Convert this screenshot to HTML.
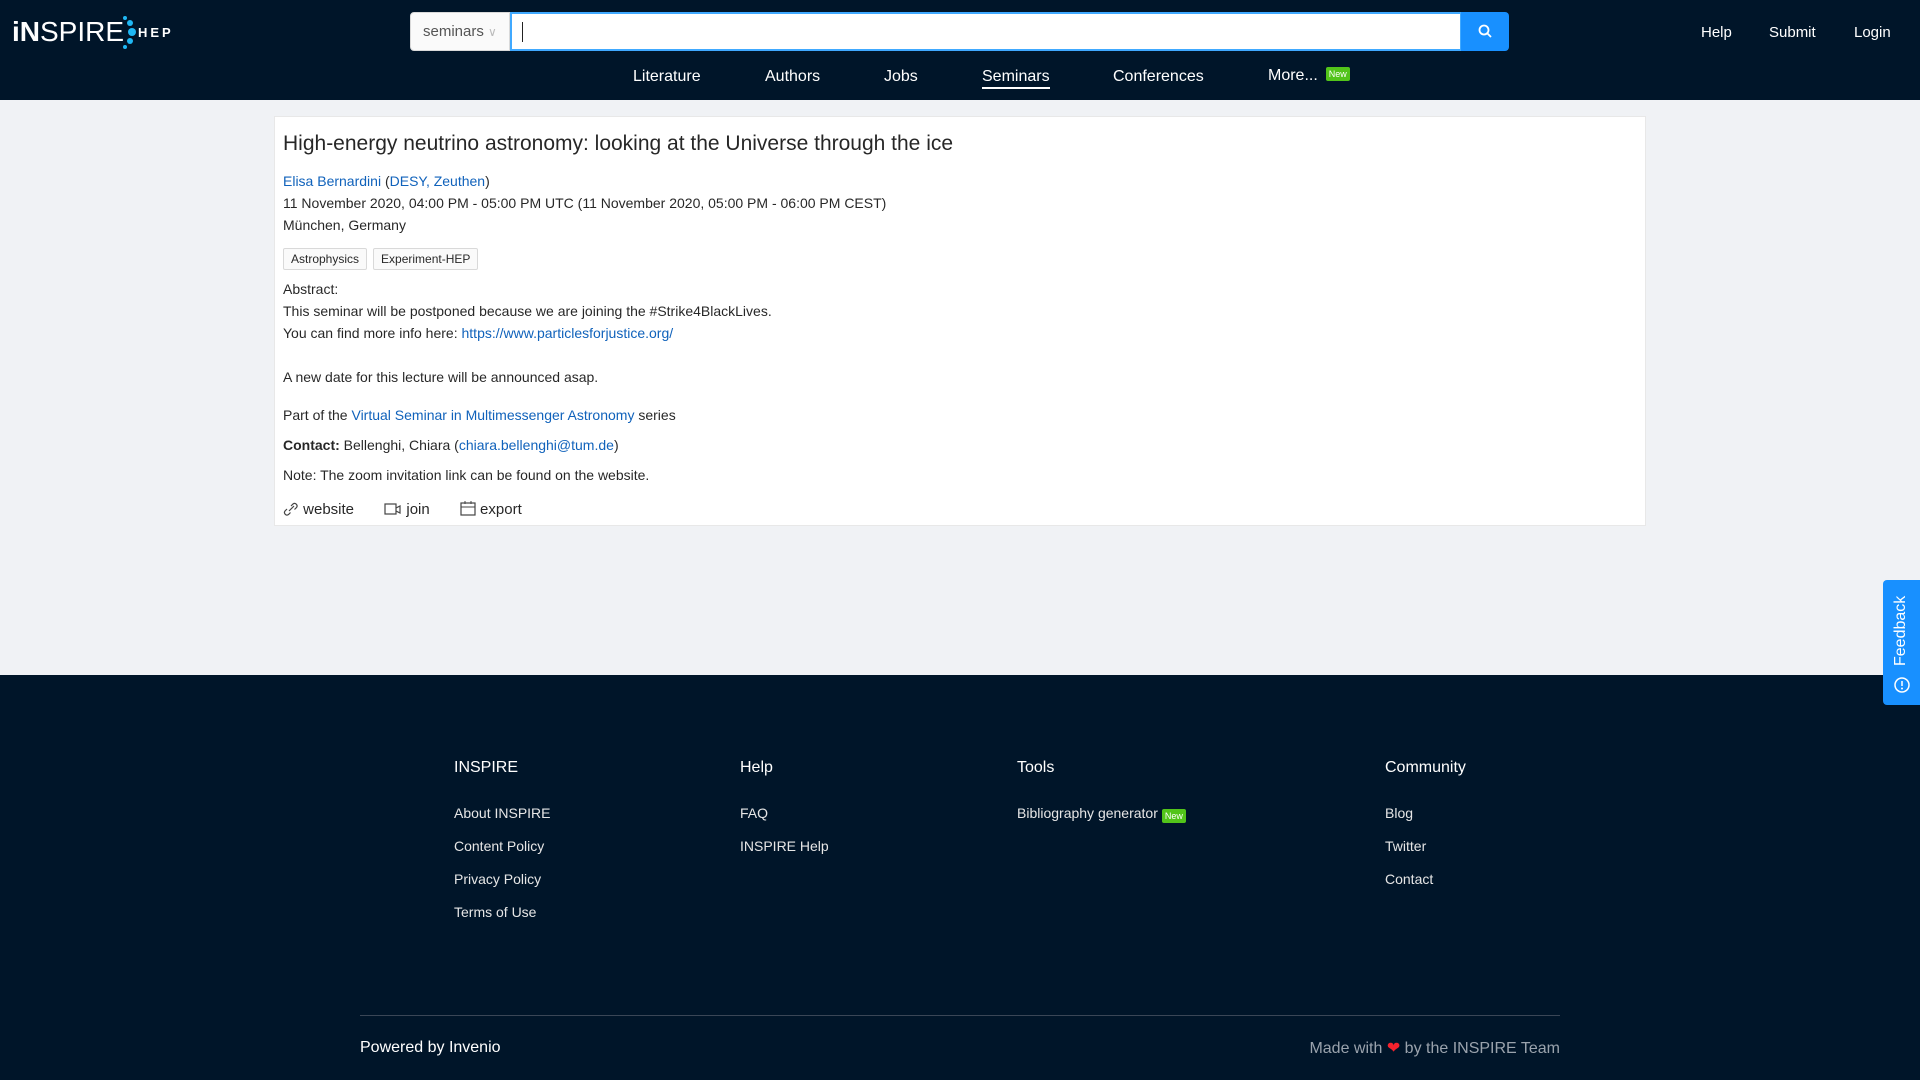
<!DOCTYPE html>
<html><head><meta charset="utf-8"><style>
*{box-sizing:border-box;margin:0;padding:0}
body{width:1920px;height:1080px;overflow:hidden;background:#f0f2f5;font-family:"Liberation Sans",sans-serif;font-size:14px;color:rgba(0,0,0,.85);position:relative}
a{color:#1062bb;text-decoration:none}
.hdr{position:absolute;left:0;top:0;width:1920px;height:100px;background:#001529;color:#fff}
.logo{position:absolute;left:12px;top:16px;font-size:28px;color:#fff;letter-spacing:0}
.logo b{font-weight:bold}
.logo .thin{font-weight:normal}
.hep{position:absolute;left:138px;top:25px;font-size:13px;font-weight:bold;letter-spacing:3px}
.sel{position:absolute;left:410px;top:12px;width:100px;height:39px;background:#fafafa;border:1px solid #d9d9d9;border-radius:4px 0 0 4px;color:#555;font-size:15px;padding:10px 12px}
.inp{position:absolute;left:510px;top:12px;width:952px;height:39px;background:#fff;border:2px solid #40a9ff}
.inp i{position:absolute;left:10px;top:8px;width:1px;height:20px;background:#222}
.btn{position:absolute;left:1461px;top:12px;width:48px;height:39px;background:#1890ff;border-radius:0 4px 4px 0}
.nav{position:absolute;top:68px;font-size:16px;color:#fff}
.tr{position:absolute;top:24px;font-size:15px;color:#fff}
.new{display:inline-block;background:#52c41a;color:#fff;font-size:9px;padding:2px 3px;border-radius:2px;vertical-align:3px;margin-left:8px}
.card{position:absolute;left:274px;top:116px;width:1372px;height:410px;background:#fff;border:1px solid #e8e8e8;padding:0 8px}
.card h1{font-weight:normal;font-size:21px;position:absolute;left:8px;top:15px;color:rgba(0,0,0,.85)}
.l{position:absolute;left:8px;white-space:nowrap}
.tag{display:inline-block;border:1px solid #d9d9d9;background:#fafafa;font-size:12px;padding:3px 7px;margin-right:6px;border-radius:2px}
.foot{position:absolute;left:0;top:675px;width:1920px;height:405px;background:#001529;color:#fff}
.fh{position:absolute;top:84px;font-size:16px}
.fl{position:absolute;font-size:14px;color:#e6e6e6}
.fb{position:absolute;right:0;top:580px;width:37px;height:125px;background:#1890ff;border-radius:4px 0 0 4px;z-index:5}
.fb span{position:absolute;left:9px;top:86px;transform:rotate(-90deg);transform-origin:0 0;color:#fff;font-size:16px;white-space:nowrap}
</style></head><body>
<div class="hdr">
<div class="logo"><b>iN</b><span class="thin">SPIRE</span></div>
<svg style="position:absolute;left:120px;top:15px" width="20" height="35"><circle cx="5" cy="3" r="2" fill="#1fb8f4"/><circle cx="10" cy="8" r="3" fill="#1fb8f4"/><circle cx="12" cy="17" r="4" fill="#1fb8f4"/><circle cx="10" cy="26" r="3" fill="#1fb8f4"/><circle cx="5" cy="32" r="2" fill="#1fb8f4"/></svg>
<div class="hep">HEP</div>
<div class="sel">seminars <span style="color:#bbb;font-size:12px">&#8744;</span></div>
<div class="inp"><i></i></div>
<div class="btn"><svg width="48" height="39"><circle cx="23" cy="18" r="4.5" fill="none" stroke="#fff" stroke-width="1.8"/><line x1="26.5" y1="21.5" x2="30" y2="25" stroke="#fff" stroke-width="1.8"/></svg></div>
<div class="tr" style="left:1701px">Help</div><div class="tr" style="left:1769px">Submit</div><div class="tr" style="left:1854px">Login</div>
<div class="nav" style="left:633px">Literature</div>
<div class="nav" style="left:765px">Authors</div>
<div class="nav" style="left:884px">Jobs</div>
<div class="nav" style="left:982px;border-bottom:2px solid #fff;padding-bottom:1px">Seminars</div>
<div class="nav" style="left:1113px">Conferences</div>
<div class="nav" style="left:1268px;top:67px">More...<span class="new">New</span></div>
</div>
<div class="card">
<h1>High-energy neutrino astronomy: looking at the Universe through the ice</h1>
<div class="l" style="top:56px"><a>Elisa Bernardini</a> (<a>DESY, Zeuthen</a>)</div>
<div class="l" style="top:78px">11 November 2020, 04:00 PM - 05:00 PM UTC (11 November 2020, 05:00 PM - 06:00 PM CEST)</div>
<div class="l" style="top:100px">München, Germany</div>
<div class="l" style="top:131px"><span class="tag">Astrophysics</span><span class="tag">Experiment-HEP</span></div>
<div class="l" style="top:164px">Abstract:</div>
<div class="l" style="top:186px">This seminar will be postponed because we are joining the #Strike4BlackLives.</div>
<div class="l" style="top:208px">You can find more info here: <a>https://www.particlesforjustice.org/</a></div>
<div class="l" style="top:252px">A new date for this lecture will be announced asap.</div>
<div class="l" style="top:290px">Part of the <a>Virtual Seminar in Multimessenger Astronomy</a> series</div>
<div class="l" style="top:320px"><b>Contact:</b> Bellenghi, Chiara (<a>chiara.bellenghi@tum.de</a>)</div>
<div class="l" style="top:350px">Note: The zoom invitation link can be found on the website.</div>
<div class="l" style="top:383px;font-size:15px">
<svg width="16" height="14" style="vertical-align:-2px"><path d="M6 9l5-5M4 7l-2 2a2.5 2.5 0 003.5 3.5l2-2M8 4l2-2a2.5 2.5 0 013.5 3.5l-2 2" fill="none" stroke="#444" stroke-width="1.2"/></svg> website
<svg width="18" height="14" style="vertical-align:-2px;margin-left:26px"><rect x="1" y="2" width="11" height="10" fill="none" stroke="#444" stroke-width="1.2"/><path d="M12 6l4-2v7l-4-2" fill="none" stroke="#444" stroke-width="1.2"/></svg> join
<svg width="16" height="16" style="vertical-align:-2px;margin-left:26px"><rect x="1" y="3" width="14" height="12" fill="none" stroke="#444" stroke-width="1.2"/><line x1="1" y1="7" x2="15" y2="7" stroke="#444"/><line x1="5" y1="1" x2="5" y2="4" stroke="#444"/><line x1="11" y1="1" x2="11" y2="4" stroke="#444"/></svg> export
</div>
</div>
<div class="foot">
<div class="fh" style="left:454px">INSPIRE</div>
<div class="fl" style="left:454px;top:130px">About INSPIRE</div>
<div class="fl" style="left:454px;top:163px">Content Policy</div>
<div class="fl" style="left:454px;top:196px">Privacy Policy</div>
<div class="fl" style="left:454px;top:229px">Terms of Use</div>
<div class="fh" style="left:740px">Help</div>
<div class="fl" style="left:740px;top:130px">FAQ</div>
<div class="fl" style="left:740px;top:163px">INSPIRE Help</div>
<div class="fh" style="left:1017px">Tools</div>
<div class="fl" style="left:1017px;top:130px">Bibliography generator<span class="new" style="margin-left:4px;vertical-align:-1px">New</span></div>
<div class="fh" style="left:1385px">Community</div>
<div class="fl" style="left:1385px;top:130px">Blog</div>
<div class="fl" style="left:1385px;top:163px">Twitter</div>
<div class="fl" style="left:1385px;top:196px">Contact</div>
<div style="position:absolute;left:360px;top:340px;width:1200px;height:1px;background:#3a4656"></div>
<div style="position:absolute;left:360px;top:364px;font-size:16px">Powered by Invenio</div>
<div style="position:absolute;right:360px;top:363px;font-size:16px;color:#9aa3ad">Made with <span style="color:#f5222d">&#10084;</span> by the INSPIRE Team</div>
</div>
<div class="fb"><span>Feedback</span><svg style="position:absolute;left:10px;top:96px" width="18" height="18"><circle cx="9" cy="9" r="7" fill="none" stroke="#fff" stroke-width="1.5"/><line x1="9" y1="5" x2="9" y2="10" stroke="#fff" stroke-width="1.5"/><circle cx="9" cy="12.5" r="1" fill="#fff"/></svg></div>
</body></html>
